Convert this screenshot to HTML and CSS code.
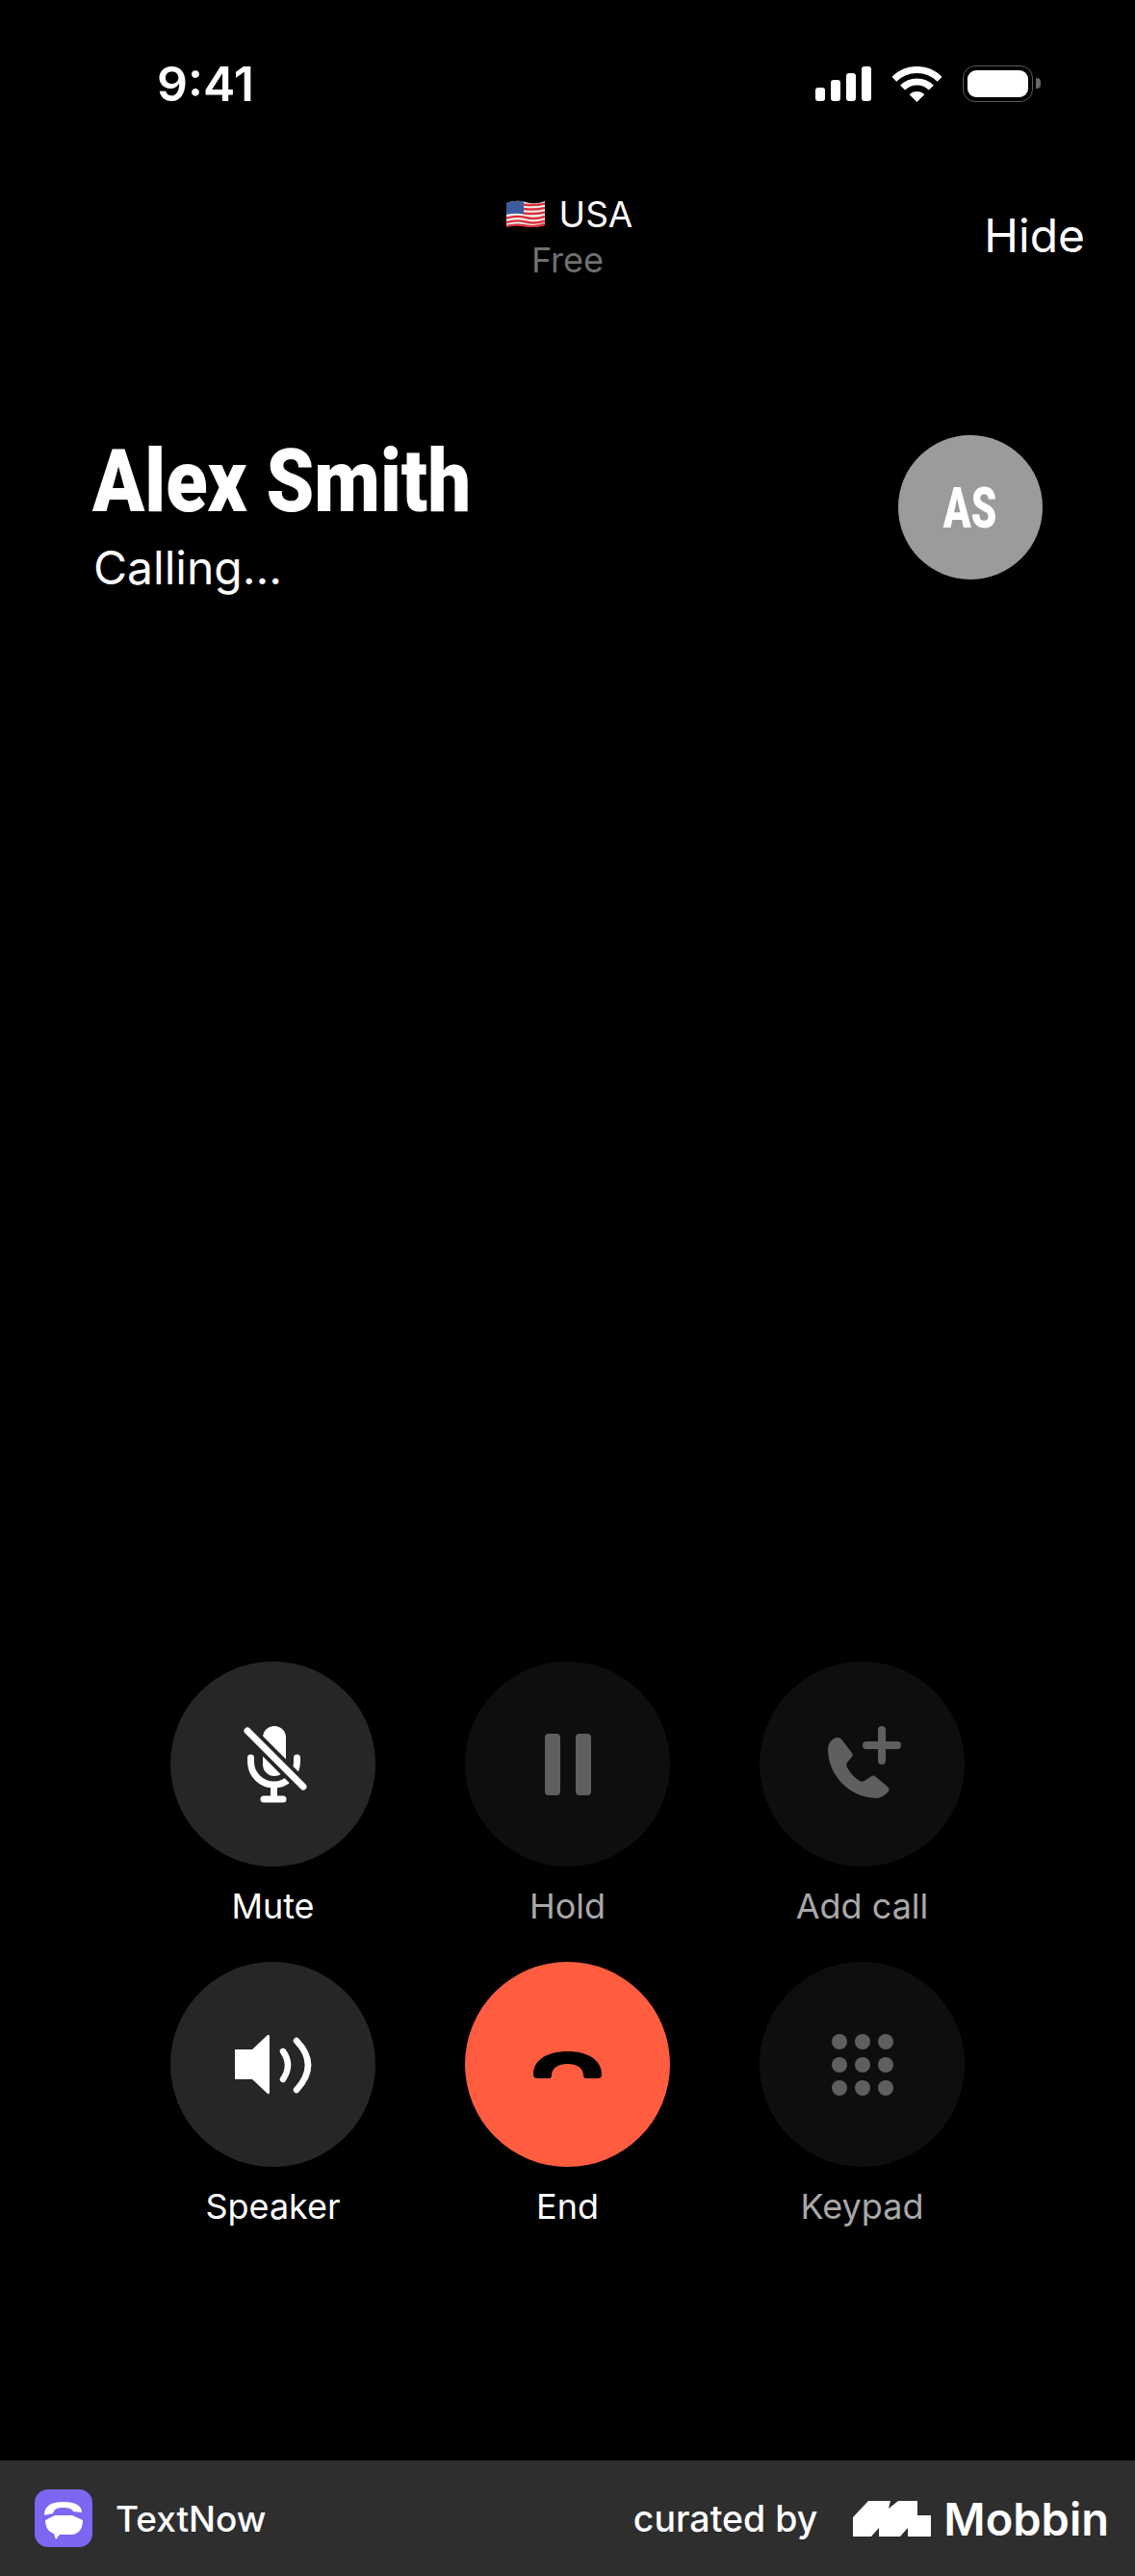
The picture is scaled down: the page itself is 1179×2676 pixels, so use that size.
FILE: index.html
```html
<!DOCTYPE html>
<html lang="en">
<head>
    <meta charset="UTF-8">
    <meta name="viewport" content="width=device-width, initial-scale=1.0">
    <title>TextNow Call</title>
    <link rel="stylesheet" href="styles.css">
</head>
<body>
<div class="screen">
    <div class="status-bar">
        <span class="time">9:41</span>
        <div class="status-icons">
            <svg class="signal" width="58" height="36" viewBox="0 0 58 36">
                <rect x="0" y="22" width="10" height="14" rx="3"/>
                <rect x="16" y="14" width="10" height="22" rx="3"/>
                <rect x="32" y="7" width="10" height="29" rx="3"/>
                <rect x="48" y="0" width="10" height="36" rx="3"/>
            </svg>
            <svg class="wifi" width="51" height="37" viewBox="0 0 51 37">
                <path d="M1.8 13.3A33.5 33.5 0 0 1 49.2 13.3" fill="none" stroke="#fff" stroke-width="7"/>
                <path d="M10.6 22.1A21 21 0 0 1 40.4 22.1" fill="none" stroke="#fff" stroke-width="7"/>
                <path d="M25.5 37L17.7 29.2A11 11 0 0 1 33.3 29.2Z" fill="#fff"/>
            </svg>
            <div class="battery">
                <div class="battery-level"></div>
                <div class="battery-tip"></div>
            </div>
        </div>
    </div>

    <div class="top-bar">
        <div></div>
        <div class="plan">
            <div class="plan-country">
                <svg class="flag" width="40" height="28" viewBox="0 0 40 28">
                    <path d="M0 3Q10 -1 20 2T40 1V25Q30 29 20 26T0 27Z" fill="#f4f0f0"/>
                    <g fill="none" stroke="#d8323c" stroke-width="2.4">
                        <path d="M18 4.5Q30 6 40 3.5"/>
                        <path d="M18 9Q30 10.500 40 8"/>
                        <path d="M18 13.500Q30 15 40 12.500"/>
                        <path d="M0 18.500Q10 15.500 20 18T40 17"/>
                        <path d="M0 23Q10 20 20 22.500T40 21.500"/>
                        <path d="M0 27Q10 24.500 20 26.500T40 25"/>
                    </g>
                    <path d="M0 3Q9 -0.500 18 1.500V14.500Q9 13 0 15Z" fill="#3c5a9e"/>
                </svg>
                <span>USA</span>
            </div>
            <div class="plan-type">Free</div>
        </div>
        <div class="hide">Hide</div>
    </div>

    <div class="contact">
        <div class="contact-text">
            <div class="contact-name">Alex Smith</div>
            <div class="contact-state">Calling...</div>
        </div>
        <div class="avatar"><span class="avatar-text">AS</span></div>
    </div>

    <div class="controls">
        <div class="control">
            <div class="circle circle-on">
                <svg width="72" height="88" viewBox="0 0 72 88">
                    <rect x="25" y="4" width="24" height="52" rx="12" fill="#fff"/>
                    <path d="M12.500 37V41A24 24 0 0 0 60.500 41V37" fill="none" stroke="#fff" stroke-width="7" stroke-linecap="round"/>
                    <path d="M36.500 66V79M26 80H46" fill="none" stroke="#fff" stroke-width="7" stroke-linecap="round"/>
                    <path d="M7 7L69 69" stroke="#262626" stroke-width="15"/>
                    <path d="M9 9L67 67" stroke="#fff" stroke-width="7" stroke-linecap="round"/>
                </svg>
            </div>
            <div class="control-label">Mute</div>
        </div>
        <div class="control control-off">
            <div class="circle">
                <div class="pause"><span></span><span></span></div>
            </div>
            <div class="control-label">Hold</div>
        </div>
        <div class="control control-off">
            <div class="circle">
                <svg width="80" height="80" viewBox="0 0 80 80">
                    <path d="M14 12C16 12 18 13 19 15L29 28C30 30 30 31 28 33L24 38C23 40 23 41 24 43C27 49 32 54 37 57C39 58 40 58 42 57L48 53C50 51 52 51 54 53L66 63C68 65 68 67 66 69C62 73 58 75 54 75C25 74 4 50 4 24C4 18 9 12 14 12Z" fill="#5f5f5f"/>
                    <path d="M60 4V36M44 20H76" fill="none" stroke="#5f5f5f" stroke-width="8" stroke-linecap="round"/>
                </svg>
            </div>
            <div class="control-label">Add call</div>
        </div>
        <div class="control">
            <div class="circle circle-on">
                <svg width="88" height="70" viewBox="0 0 88 70">
                    <path d="M4 19H22L38 4Q40 3 40 6V63Q40 66 38 65L22 50H4Z" fill="#fff"/>
                    <path d="M54 21Q64 35 54 50" fill="none" stroke="#fff" stroke-width="6.500" stroke-linecap="round"/>
                    <path d="M68 10Q92 35 68 61" fill="none" stroke="#fff" stroke-width="6.500" stroke-linecap="round"/>
                </svg>
            </div>
            <div class="control-label">Speaker</div>
        </div>
        <div class="control">
            <div class="circle circle-end">
                <svg width="71" height="28" viewBox="0 0 71 28">
                    <path d="M0 24C0 8 16 0 35.500 0C55 0 71 8 71 24C71 27 69 28 67 28H55C53 28 52 27 52 25C52 17 45 13 35.500 13C26 13 19 17 19 25C19 27 18 28 16 28H4C2 28 0 27 0 24Z" fill="#000"/>
                </svg>
            </div>
            <div class="control-label">End</div>
        </div>
        <div class="control control-off">
            <div class="circle">
                <div class="keypad">
                    <span></span><span></span><span></span>
                    <span></span><span></span><span></span>
                    <span></span><span></span><span></span>
                </div>
            </div>
            <div class="control-label">Keypad</div>
        </div>
    </div>

    <footer class="footer">
        <div class="app-info">
            <svg width="60" height="60" viewBox="0 0 60 60">
                <rect width="60" height="60" rx="14" fill="#7c66f2"/>
                <path d="M10 27C10 17 17 13 30 13C43 13 49 17 49 24L40 23C39 20 35 19 29 19C23 19 20 21 19 25Z" fill="#fff"/>
                <path d="M11 32L21 27H39L50 32C50 41 46 46 39 47H26L22 52L20 46C14 44 11 39 11 32Z" fill="#fff"/>
            </svg>
            <span class="app-name">TextNow</span>
        </div>
        <div class="credit">
            <span class="curated">curated by</span>
            <svg width="81" height="37" viewBox="0 0 81 37">
                <path d="M0 17L16 0H39L37 8L47 0H67V15H81V37H57V28L49 37H27V28L19 37H0Z" fill="#fff"/>
            </svg>
            <span class="brand">Mobbin</span>
        </div>
    </footer>
</div>
</body>
</html>
```

FILE: styles.css
```css
* {
    box-sizing: border-box;
}
body {
    margin: 0;
    background-color: #000;
    color: #fff;
    font-family: 'Inter', 'Liberation Sans', sans-serif;
}
.screen {
    width: 1179px;
    height: 2676px;
    display: flex;
    flex-direction: column;
    overflow: hidden;
}

/* status bar */
.status-bar {
    display: flex;
    justify-content: space-between;
    align-items: center;
    height: 38px;
    margin-top: 68px;
    padding: 0 106px 0 163px;
}
.time {
    font-size: 50px;
    font-weight: 600;
    line-height: 38px;
}
.status-icons {
    display: flex;
    align-items: center;
    gap: 22px;
}
.signal {
    fill: #fff;
}
.battery {
    position: relative;
    width: 73px;
    height: 38px;
    padding: 4px;
    border: 1.5px solid #5c5c5c;
    border-radius: 13px;
}
.battery-level {
    height: 100%;
    background: #fff;
    border-radius: 9px;
}
.battery-tip {
    position: absolute;
    top: 12px;
    right: -9px;
    width: 5px;
    height: 11px;
    background: #666;
    border-radius: 0 4px 4px 0;
}

/* top bar */
.top-bar {
    display: grid;
    grid-template-columns: 1fr auto 1fr;
    align-items: center;
    margin-top: 100px;
    padding: 0 52px;
}
.plan {
    text-align: center;
}
.plan-country {
    display: flex;
    align-items: center;
    gap: 15px;
    height: 32px;
    padding-left: 4px;
    font-size: 37px;
    font-weight: 400;
}
.plan-type {
    margin-top: 16px;
    font-size: 36px;
    line-height: 32px;
    color: #707070;
}
.hide {
    justify-self: end;
    margin-top: -2px;
    font-size: 48px;
    line-height: 56px;
}

/* contact */
.contact {
    display: flex;
    justify-content: space-between;
    margin-top: 166px;
    padding: 0 96px 0 97px;
}
.contact-text {
    margin-top: 12px;
}
.contact-name {
    font-family: 'Roboto', 'Liberation Sans', sans-serif;
    font-size: 90px;
    font-weight: 900;
    line-height: 74px;
    transform: scaleX(0.885);
    transform-origin: left center;
    margin-left: -1px;
    white-space: nowrap;
}
.contact-state {
    margin-top: 22px;
    font-size: 48px;
    line-height: 60px;
}
.avatar {
    display: flex;
    align-items: center;
    justify-content: center;
    width: 150px;
    height: 150px;
    background: #9b9b9b;
    border-radius: 50%;
}
.avatar-text {
    font-family: 'Roboto', 'Liberation Sans', sans-serif;
    font-size: 59px;
    font-weight: 900;
    transform: scaleX(0.72);
}

/* call controls */
.controls {
    display: grid;
    grid-template-columns: repeat(3, 213px);
    column-gap: 93px;
    row-gap: 38px;
    justify-content: center;
    margin-top: auto;
    padding-bottom: 244px;
}
.control {
    display: flex;
    flex-direction: column;
    align-items: center;
}
.circle {
    display: flex;
    align-items: center;
    justify-content: center;
    width: 213px;
    height: 213px;
    background: #0e0e0e;
    border-radius: 50%;
}
.circle-on {
    background: #262626;
}
.circle-end {
    background: #ff5c40;
}
.control-label {
    margin-top: 21px;
    font-size: 36px;
    line-height: 40px;
    white-space: nowrap;
}
.control-off .control-label {
    color: #a8a8a8;
}
.pause {
    display: flex;
    gap: 16px;
}
.pause span {
    width: 16px;
    height: 64px;
    background: #5f5f5f;
    border-radius: 4px;
}
.keypad {
    display: grid;
    grid-template-columns: repeat(3, 16px);
    gap: 8px;
}
.keypad span {
    height: 16px;
    background: #5f5f5f;
    border-radius: 50%;
}

/* footer */
.footer {
    display: flex;
    justify-content: space-between;
    align-items: center;
    height: 120px;
    padding: 0 27px 0 36px;
    background: #2e2e2e;
}
.app-info, .credit {
    display: flex;
    align-items: center;
}
.app-info {
    gap: 24px;
}
.app-name {
    font-size: 37px;
    font-weight: 500;
}
.curated {
    margin-right: 37px;
    font-size: 37.500px;
    font-weight: 500;
}
.brand {
    margin-left: 13px;
    font-size: 47px;
    font-weight: 600;
}
```
